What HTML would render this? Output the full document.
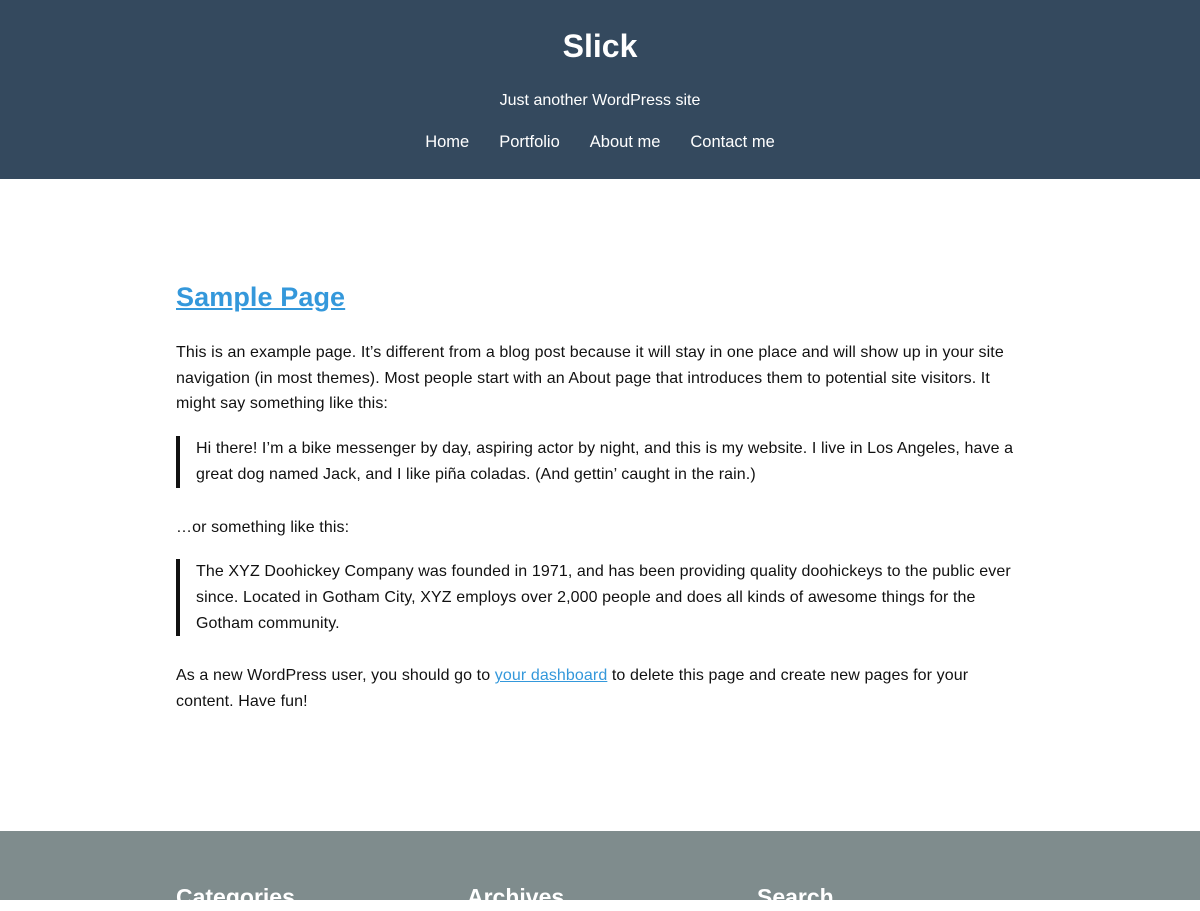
<!DOCTYPE html>
<html><head><meta charset="utf-8"><style>
*{margin:0;padding:0;box-sizing:border-box}
html,body{width:1200px;height:900px;overflow:hidden;background:#fff;font-family:"Liberation Sans","DejaVu Sans",sans-serif;color:#111}
header{background:#34495e;height:179px;position:relative;color:#fff;text-align:center}
.t{position:absolute;top:26px;left:0;right:0;font-size:32px;font-weight:bold;line-height:40px}
.tg{position:absolute;top:91px;left:0;right:0;font-size:16px;line-height:20px}
nav{position:absolute;top:132px;left:0;right:0;font-size:16.5px;line-height:20px}
nav span{margin:0 15px}
main{position:absolute;top:280px;left:176px;width:840px;font-size:16px;line-height:25.7px;letter-spacing:0.1px}
h1{font-size:27px;line-height:34px;color:#3498db;text-decoration:underline;margin-bottom:26px}
p{margin-bottom:27px}
blockquote{border-left:4px solid #111;padding-left:16px;margin-bottom:27px;margin-top:-8px}
a{color:#3498db;text-decoration:underline}
footer{position:absolute;top:831px;left:0;width:1200px;height:69px;background:#7f8c8d;color:#fff;font-weight:bold;font-size:23px}
footer div{position:absolute;top:53px}
</style></head><body>
<header><div class="t">Slick</div><div class="tg">Just another WordPress site</div>
<nav><span>Home</span><span>Portfolio</span><span>About me</span><span>Contact me</span></nav></header>
<main>
<h1>Sample Page</h1>
<p>This is an example page. It’s different from a blog post because it will stay in one place and will show up in your site navigation (in most themes). Most people start with an About page that introduces them to potential site visitors. It might say something like this:</p>
<blockquote>Hi there! I’m a bike messenger by day, aspiring actor by night, and this is my website. I live in Los Angeles, have a great dog named Jack, and I like piña coladas. (And gettin’ caught in the rain.)</blockquote>
<p>…or something like this:</p>
<blockquote>The XYZ Doohickey Company was founded in 1971, and has been providing quality doohickeys to the public ever since. Located in Gotham City, XYZ employs over 2,000 people and does all kinds of awesome things for the Gotham community.</blockquote>
<p>As a new WordPress user, you should go to <a>your dashboard</a> to delete this page and create new pages for your content. Have fun!</p>
</main>
<footer><div style="left:176px">Categories</div><div style="left:467px">Archives</div><div style="left:757px">Search</div></footer>
</body></html>
